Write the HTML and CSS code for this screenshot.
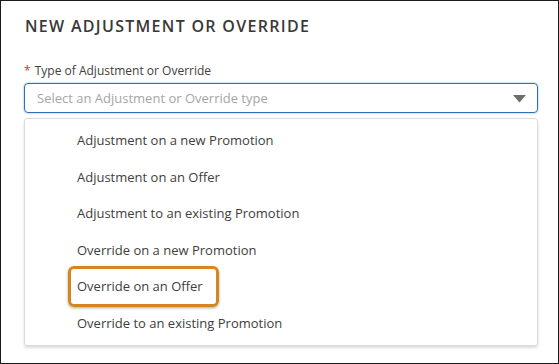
FILE: index.html
```html
<!DOCTYPE html>
<html>
<head>
<meta charset="utf-8">
<link rel="stylesheet" href="styles.css">
</head>
<body>
<div class="frame">
  <h1 class="title">NEW ADJUSTMENT OR OVERRIDE</h1>
  <div class="field">
    <label class="label"><span class="req">*</span> Type of Adjustment or Override</label>
    <div class="combo">
      <span class="placeholder">Select an Adjustment or Override type</span>
      <svg class="caret" width="13" height="8" viewBox="0 0 13 8"><path d="M0 0 H13 L6.5 7.5 Z" fill="#706e6b"/></svg>
    </div>
    <ul class="menu">
      <li class="item">Adjustment on a new Promotion</li>
      <li class="item">Adjustment on an Offer</li>
      <li class="item">Adjustment to an existing Promotion</li>
      <li class="item">Override on a new Promotion</li>
      <li class="item"><span class="hl">Override on an Offer</span></li>
      <li class="item">Override to an existing Promotion</li>
    </ul>
  </div>
</div>
</body>
</html>
```
FILE: styles.css
```css
html, body {
  margin: 0;
  padding: 0;
  background: #fff;
}
.frame {
  width: 559px;
  height: 364px;
  box-sizing: border-box;
  border: 1px solid #1a1a1a;
  padding: 15px 20px 0 23px;
  font-family: "Open Sans", "Noto Sans", sans-serif;
  color: #3e3e3c;
}
.title {
  margin: 0 0 0 1px;
  font-size: 16px;
  font-weight: 600;
  letter-spacing: 1.3px;
  line-height: 20px;
  color: #3a3836;
}
.field {
  margin-top: 26px;
}
.label {
  display: block;
  font-size: 12px;
  line-height: 18px;
  color: #3e3e3c;
}
.req {
  color: #c23934;
  margin-right: 1px;
}
.combo {
  margin-top: 3px;
  height: 30px;
  box-sizing: border-box;
  border: 1px solid #2e6fb5;
  border-radius: 4px;
  box-shadow: 0 0 2px #6ea7e0;
  display: flex;
  align-items: center;
  justify-content: space-between;
  padding: 0 11px 0 12px;
}
.placeholder {
  font-size: 13px;
  color: #a5a5a5;
}
.caret {
  display: block;
  margin-top: 2px;
}
.menu {
  list-style: none;
  margin: 5px 0 0 0;
  padding: 3px 0 4px 0;
  border: 1px solid #dddbda;
  border-radius: 3px;
  box-shadow: 0 2px 3px rgba(0,0,0,0.14);
}
.item {
  height: 36.5px;
  display: flex;
  align-items: center;
  padding-left: 52px;
  font-size: 13px;
  color: #3e3e3c;
}
.hl {
  margin-left: -9px;
  padding: 8px 13px 9px 6px;
  border: 3px solid #d6861e;
  border-radius: 6px;
  box-shadow: 0 1px 3px rgba(0,0,0,0.35);
}
```
